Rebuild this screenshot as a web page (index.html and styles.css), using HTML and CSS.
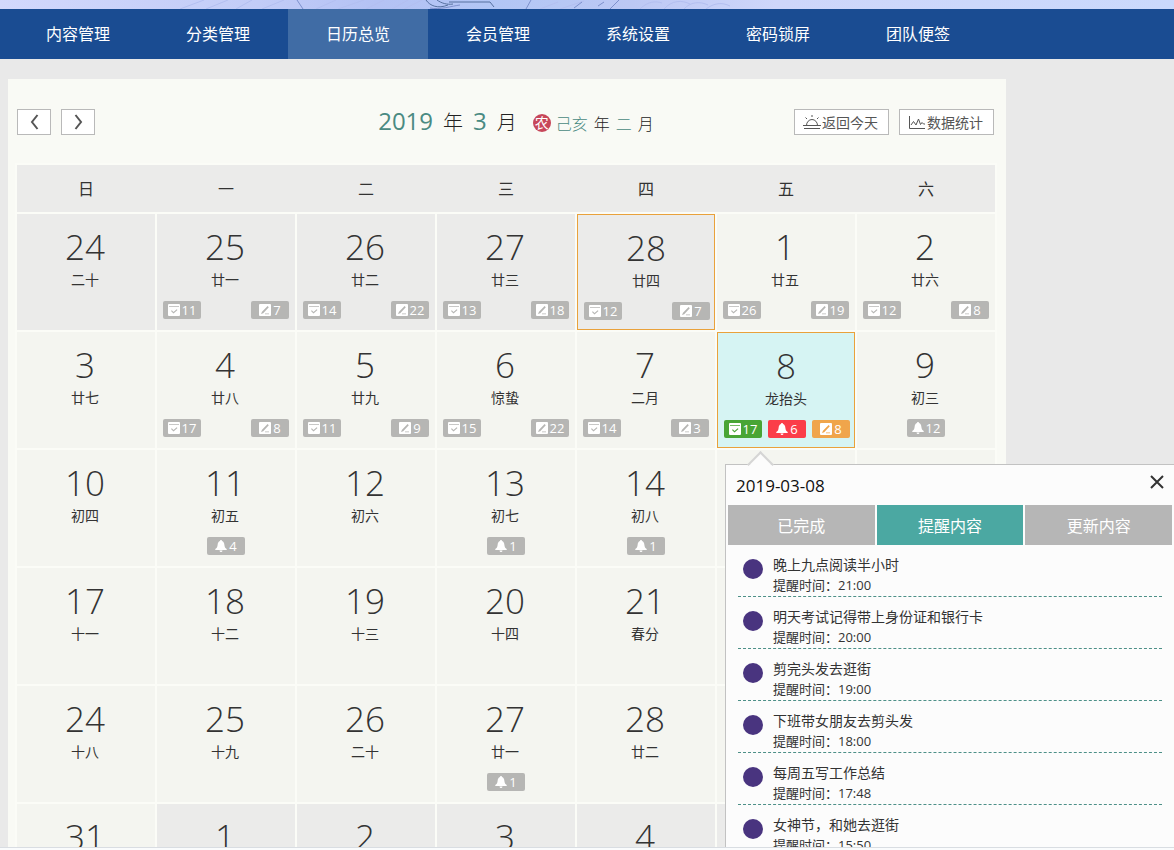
FILE: index.html
```html
<!DOCTYPE html>
<html lang="zh-CN">
<head>
<meta charset="utf-8">
<title>日历总览</title>
<meta name="viewport" content="width=device-width, initial-scale=1">
<link rel="stylesheet" href="styles.css">
</head>
<body>
<svg class="sprite" aria-hidden="true">
  <symbol id="done" viewBox="0 0 12 12"><path fill="currentColor" fill-rule="evenodd" d="M1 0h10q1 0 1 1v10q0 1-1 1H1q-1 0-1-1V1q0-1 1-1zM1 2v.7h10V2zM3 7l2.500 2.500 4-3.500-.8-.8-3.200 2.900-1.700-1.900z"/></symbol>
  <symbol id="edit" viewBox="0 0 12 12"><path fill="currentColor" fill-rule="evenodd" d="M1 0h10q1 0 1 1v10q0 1-1 1H1q-1 0-1-1V1q0-1 1-1zM2 10l2.200-.8 5.600-6-1.200-1.200L3 7.800zM6 9.500v.7h4v-.7z"/></symbol>
  <symbol id="bell" viewBox="0 0 12 12"><path fill="currentColor" d="M6 0c.7 0 1 .5 1 1 1.600.6 2.200 2 2.400 4 .2 2 .8 3 2.300 4v1H.3V9C1.800 8 2.400 7 2.600 5 2.800 3 3.400 1.600 5 1c0-.5.3-1 1-1zM4.500 10.500h3Q7.400 12 6 12t-1.500-1.500z"/></symbol>
</svg>

<div class="page">
  <div class="banner">
    <svg viewBox="0 0 780 9" width="780" height="9" fill="none" aria-hidden="true">
      <path stroke="#b3bff0" d="M180 9l24-9M206 9l22-9M236 9l16-9M262 9l22-9M316 9l20-9M338 9l26-9M366 9l18-9M392 9l16-9M404 9l18-9M540 9l18-7M560 9l24-8M640 9c8-8 16-8 22-6M664 9c8-9 18-9 26-5M684 9c6-7 16-8 24-4M706 9c8-6 16-7 24-3"/>
      <path stroke="#7d90cc" d="M297 0l6 9M526 9l5-9M610 9l9-9M430 8c10 2 22-2 30-3M574 8l8-6M598 6l6-4"/>
      <path stroke="#56709f" d="M426 0c4 6 12 9 22 5M437 0c4 3 10 5 16 4M449 2h41l4 5"/>
    </svg>
  </div>
  <nav class="nav">
    <a href="#">内容管理</a>
    <a href="#">分类管理</a>
    <a href="#" class="active" aria-current="page">日历总览</a>
    <a href="#">会员管理</a>
    <a href="#">系统设置</a>
    <a href="#">密码锁屏</a>
    <a href="#">团队便签</a>
  </nav>

  <main class="main">
    <section class="card">
      <header class="toolbar">
        <div class="pager">
          <button type="button" aria-label="上个月"><svg width="9" height="16" viewBox="0 0 9 16"><path d="M7.500 1L2 8l5.500 7"/></svg></button>
          <button type="button" aria-label="下个月"><svg width="9" height="16" viewBox="0 0 9 16"><path d="M1.500 1L7 8l-5.500 7"/></svg></button>
        </div>
        <h1 class="title">
          <span class="num">2019</span><span class="unit">年</span><span class="num">3</span><span class="unit">月</span>
          <span class="seal">农</span>
          <span class="lunar-title"><em>己亥</em><span>年</span><em>二</em><span>月</span></span>
        </h1>
        <div class="tools">
          <button type="button"><svg width="18" height="16" viewBox="0 0 18 16"><path d="M1 14.500h16M0 11.500h18M3.500 11.500a5.500 6 0 0 1 11 0M9 1v2M2.500 3.500L4 5M15.500 3.500L14 5"/></svg>返回今天</button>
          <button type="button"><svg width="18" height="16" viewBox="0 0 18 16"><path d="M1.500 2v12.500H17M3 11l2.500-3.500L8 11l2.500-6 2 5.500 1.500-2 1.500 1.500H17"/></svg>数据统计</button>
        </div>
      </header>

      <table class="calendar">
        <thead>
          <tr><th>日</th><th>一</th><th>二</th><th>三</th><th>四</th><th>五</th><th>六</th></tr>
        </thead>
        <tbody>
          <tr>
            <td class="other"><b>24</b><small>二十</small></td>
            <td class="other"><b>25</b><small>廿一</small><div class="chips"><span class="chip"><svg><use href="#done"/></svg>11</span><span class="chip"><svg><use href="#edit"/></svg>7</span></div></td>
            <td class="other"><b>26</b><small>廿二</small><div class="chips"><span class="chip"><svg><use href="#done"/></svg>14</span><span class="chip"><svg><use href="#edit"/></svg>22</span></div></td>
            <td class="other"><b>27</b><small>廿三</small><div class="chips"><span class="chip"><svg><use href="#done"/></svg>13</span><span class="chip"><svg><use href="#edit"/></svg>18</span></div></td>
            <td class="other marked"><b>28</b><small>廿四</small><div class="chips"><span class="chip"><svg><use href="#done"/></svg>12</span><span class="chip"><svg><use href="#edit"/></svg>7</span></div></td>
            <td><b>1</b><small>廿五</small><div class="chips"><span class="chip"><svg><use href="#done"/></svg>26</span><span class="chip"><svg><use href="#edit"/></svg>19</span></div></td>
            <td><b>2</b><small>廿六</small><div class="chips"><span class="chip"><svg><use href="#done"/></svg>12</span><span class="chip"><svg><use href="#edit"/></svg>8</span></div></td>
          </tr>
          <tr>
            <td><b>3</b><small>廿七</small></td>
            <td><b>4</b><small>廿八</small><div class="chips"><span class="chip"><svg><use href="#done"/></svg>17</span><span class="chip"><svg><use href="#edit"/></svg>8</span></div></td>
            <td><b>5</b><small>廿九</small><div class="chips"><span class="chip"><svg><use href="#done"/></svg>11</span><span class="chip"><svg><use href="#edit"/></svg>9</span></div></td>
            <td><b>6</b><small>惊蛰</small><div class="chips"><span class="chip"><svg><use href="#done"/></svg>15</span><span class="chip"><svg><use href="#edit"/></svg>22</span></div></td>
            <td><b>7</b><small>二月</small><div class="chips"><span class="chip"><svg><use href="#done"/></svg>14</span><span class="chip"><svg><use href="#edit"/></svg>3</span></div></td>
            <td class="marked today"><b>8</b><small>龙抬头</small><div class="chips"><span class="chip green"><svg><use href="#done"/></svg>17</span><span class="chip red"><svg><use href="#bell"/></svg>6</span><span class="chip orange"><svg><use href="#edit"/></svg>8</span></div>
              <div class="popover" role="dialog" aria-label="2019-03-08">
                <div class="popover-head"><span>2019-03-08</span><button type="button" aria-label="关闭"><svg width="14" height="14" viewBox="0 0 14 14"><path d="M1 1l12 12M13 1L1 13"/></svg></button></div>
                <div class="tabs">
                  <button type="button">已完成</button>
                  <button type="button" class="active">提醒内容</button>
                  <button type="button">更新内容</button>
                </div>
                <ul class="reminders">
                  <li><div>晚上九点阅读半小时</div><div class="time">提醒时间：21:00</div></li>
                  <li><div>明天考试记得带上身份证和银行卡</div><div class="time">提醒时间：20:00</div></li>
                  <li><div>剪完头发去逛街</div><div class="time">提醒时间：19:00</div></li>
                  <li><div>下班带女朋友去剪头发</div><div class="time">提醒时间：18:00</div></li>
                  <li><div>每周五写工作总结</div><div class="time">提醒时间：17:48</div></li>
                  <li><div>女神节，和她去逛街</div><div class="time">提醒时间：15:50</div></li>
                </ul>
              </div>
            </td>
            <td><b>9</b><small>初三</small><div class="chips single"><span class="chip"><svg><use href="#bell"/></svg>12</span></div></td>
          </tr>
          <tr>
            <td><b>10</b><small>初四</small></td>
            <td><b>11</b><small>初五</small><div class="chips single"><span class="chip"><svg><use href="#bell"/></svg>4</span></div></td>
            <td><b>12</b><small>初六</small></td>
            <td><b>13</b><small>初七</small><div class="chips single"><span class="chip"><svg><use href="#bell"/></svg>1</span></div></td>
            <td><b>14</b><small>初八</small><div class="chips single"><span class="chip"><svg><use href="#bell"/></svg>1</span></div></td>
            <td></td>
            <td></td>
          </tr>
          <tr>
            <td><b>17</b><small>十一</small></td>
            <td><b>18</b><small>十二</small></td>
            <td><b>19</b><small>十三</small></td>
            <td><b>20</b><small>十四</small></td>
            <td><b>21</b><small>春分</small></td>
            <td></td>
            <td></td>
          </tr>
          <tr>
            <td><b>24</b><small>十八</small></td>
            <td><b>25</b><small>十九</small></td>
            <td><b>26</b><small>二十</small></td>
            <td><b>27</b><small>廿一</small><div class="chips single"><span class="chip"><svg><use href="#bell"/></svg>1</span></div></td>
            <td><b>28</b><small>廿二</small></td>
            <td></td>
            <td></td>
          </tr>
          <tr>
            <td><b>31</b></td>
            <td class="other"><b>1</b></td>
            <td class="other"><b>2</b></td>
            <td class="other"><b>3</b></td>
            <td class="other"><b>4</b></td>
            <td class="other"></td>
            <td class="other"></td>
          </tr>
        </tbody>
      </table>
    </section>
  </main>
  <div class="edge"></div>
</div>
</body>
</html>
```
FILE: styles.css
```css
* { box-sizing: border-box; }

body {
  margin: 0;
  font-family: "Open Sans", "Noto Sans CJK SC", sans-serif;
  font-size: 16px;
  color: #333;
  background: #e9e9e9;
}

button {
  margin: 0;
  padding: 0;
  border: 0;
  background: none;
  color: inherit;
  font: inherit;
  cursor: pointer;
}

svg { flex: none; }
.sprite { position: absolute; width: 0; height: 0; }

.page {
  display: flex;
  flex-direction: column;
  height: 100vh;
  overflow: hidden;
}

.banner {
  flex: none;
  display: flex;
  height: 9px;
  overflow: hidden;
  background: linear-gradient(90deg, #d2d8fc 0, #c2ccf7 22%, #b4c2f4 32%, #b2c6f5 42%, #bcc8f4 54%, #ced6fa 66%, #cad9fc 100%);
}

.nav {
  flex: none;
  display: flex;
  height: 50px;
  padding-left: 8px;
  background: #1a4c92;
}
.nav a {
  width: 140px;
  line-height: 50px;
  text-align: center;
  color: #fff;
  text-decoration: none;
}
.nav .active { background: #406ca5; }

.main {
  flex: 1;
  min-height: 0;
  padding: 20px 168px 0 8px;
  overflow: hidden;
}
.card {
  padding: 30px 11px 30px 9px;
  background: #f9faf5;
}

.toolbar {
  display: grid;
  grid-template-columns: 1fr auto 1fr;
  grid-template-rows: 26px;
  align-items: center;
  margin-bottom: 30px;
}
.toolbar button {
  display: flex;
  align-items: center;
  justify-content: center;
  height: 26px;
  border: 1px solid #b9b9b9;
  background: #fff;
  color: #555;
}
.toolbar svg { fill: none; stroke: currentColor; }
.pager { display: flex; gap: 10px; }
.pager button { width: 34px; }
.pager svg { stroke-width: 2; }
.tools {
  display: flex;
  justify-content: flex-end;
  gap: 10px;
  padding-right: 1px;
}
.tools button {
  justify-content: flex-start;
  width: 95px;
  padding-left: 8px;
  gap: 1px;
  font-size: 14px;
}

.title {
  display: flex;
  align-items: baseline;
  margin: 0;
  padding-left: 20px;
  line-height: 26px;
  font-size: 20px;
  font-weight: 300;
  color: #222;
}
.title .num {
  font-size: 24px;
  font-weight: 400;
  color: #4a8a82;
}
.title .unit { margin: 0 10px; }
.title .seal {
  align-self: center;
  width: 18px;
  height: 18px;
  margin: 2px 5px 0 6px;
  border-radius: 50%;
  background: #c7475a;
  color: #fff;
  font-size: 14px;
  font-weight: 400;
  line-height: 18px;
  text-align: center;
}
.lunar-title {
  display: flex;
  gap: 6px;
  font-size: 16px;
}
.lunar-title em { font-style: normal; color: #4a8a82; }

.calendar {
  width: calc(100% + 4px);
  margin: -2px;
  border-spacing: 2px;
  table-layout: fixed;
  background: #fbfcf7;
}
.calendar th {
  height: 47px;
  padding: 0 0 2px;
  background: #ebebea;
  box-shadow: 2px 0 #ebebea;
  font-weight: 400;
}
.calendar th:last-child { box-shadow: none; }
.calendar td {
  position: relative;
  height: 116px;
  padding: 13px 6px 0;
  background: #f4f5f0;
  text-align: center;
  vertical-align: top;
}
.calendar .other { background: #ebebea; }
.calendar .marked {
  padding-right: 4px;
  border: 1px solid #e9a13b;
}
.calendar .today { background: #d6f4f3; }
.calendar b {
  display: block;
  padding-right: 2px;
  font-size: 35px;
  font-weight: 300;
  line-height: 40px;
}
.calendar small {
  display: block;
  margin-top: 3px;
  padding-right: 2px;
  font-size: 14px;
  line-height: 20px;
}

.chips {
  display: flex;
  justify-content: space-between;
  margin-top: 11px;
}
.chips.single { justify-content: center; }
.chip {
  display: flex;
  align-items: center;
  justify-content: center;
  gap: 2px;
  width: 38px;
  height: 18px;
  border-radius: 2px;
  background: #b6b6b4;
  color: #fff;
  font-size: 13px;
  line-height: 18px;
}
.chip svg { width: 12px; height: 12px; }
.chip.green { background: #48a535; }
.chip.red { background: #fb3d49; }
.chip.orange { background: #f0a54b; }

.popover {
  position: absolute;
  z-index: 1;
  top: 131px;
  left: 7px;
  width: 450px;
  padding: 0 2px;
  border: 1px solid #c2c2c2;
  background: #fcfcfc;
  text-align: left;
}
.popover::before {
  content: "";
  position: absolute;
  top: -10px;
  left: 25px;
  width: 17px;
  height: 17px;
  border: solid #d5d5d5;
  border-width: 2px 0 0 2px;
  background: linear-gradient(135deg, #fcfcfc 50%, transparent 50%);
  transform: rotate(45deg);
}
.popover-head {
  display: flex;
  align-items: center;
  justify-content: space-between;
  height: 40px;
  padding: 0 8px;
  font-size: 17px;
  color: #111;
}
.popover-head button { height: 20px; margin-bottom: 6px; }
.popover-head svg {
  display: block;
  fill: none;
  stroke: #333;
  stroke-width: 2;
}
.tabs {
  display: grid;
  grid-template-columns: repeat(3, 1fr);
  gap: 2px;
}
.tabs button {
  height: 40px;
  background: #b6b6b6;
  color: #fff;
}
.tabs .active { background: #4ba8a2; }

.reminders {
  margin: 0;
  padding: 0 10px;
  list-style: none;
  font-size: 14px;
  line-height: 20px;
}
.reminders li {
  position: relative;
  height: 52px;
  padding: 10px 0 0 35px;
  border-bottom: 1px dashed #4d9088;
}
.reminders li::before {
  content: "";
  position: absolute;
  top: 14px;
  left: 5px;
  width: 20px;
  height: 20px;
  border-radius: 50%;
  background: #49347f;
}
.reminders .time { font-size: 13px; }

.edge {
  flex: none;
  height: 3px;
  border-top: 1px solid #d9dde2;
  background: #fafcfd;
}
```
